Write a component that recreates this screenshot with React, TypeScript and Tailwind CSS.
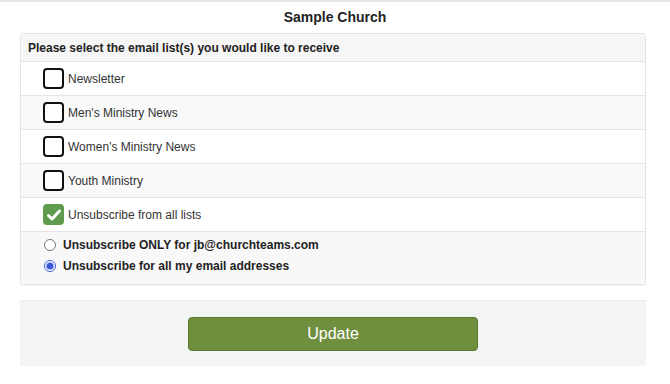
import { useState } from 'react'

const lists = [
  { label: 'Newsletter', checked: false },
  { label: "Men's Ministry News", checked: false },
  { label: "Women's Ministry News", checked: false },
  { label: 'Youth Ministry', checked: false },
  { label: 'Unsubscribe from all lists', checked: true },
]

const Box = ({ checked }: { checked: boolean }) =>
  checked ? (
    <span className="flex h-[21px] w-[21px] shrink-0 items-center justify-center rounded-[4px] bg-[#5f9b4c]">
      <svg width="16" height="16" viewBox="0 0 16 16" fill="none">
        <path d="M2.5 8.5l3.5 3.5 7.5-8" stroke="white" strokeWidth="3" strokeLinecap="round" strokeLinejoin="round" />
      </svg>
    </span>
  ) : (
    <span className="h-[21px] w-[21px] shrink-0 rounded-[4px] border-2 border-[#111] bg-white" />
  )

export default function App() {
  const [scope, setScope] = useState('all')
  return (
    <div className="min-h-[384px] bg-white font-['Liberation_Sans',Arial,sans-serif] text-[#333]">
      <div className="border-t-2 border-[#e6e6e6] pt-[5px] text-center text-[14px] leading-[20px] font-bold text-[#222]">
        Sample Church
      </div>
      <div className="mx-[20px] mt-[6px] w-[626px] rounded-[3px] border border-[#e4e4e4] bg-white shadow-[0_1px_1px_rgba(0,0,0,0.05)]">
        <div className="flex h-[28px] items-center border-b border-[#e4e4e4] bg-[#f6f6f6] px-[7px] text-[12px] font-bold text-[#222]">
          Please select the email list(s) you would like to receive
        </div>
        {lists.map((item, i) => (
          <div
            key={item.label}
            className={`flex h-[34px] items-center gap-[4px] border-b border-[#e4e4e4] pl-[22px] text-[12px] text-[#333] ${i % 2 === 1 ? 'bg-[#f9f9f9]' : 'bg-white'}`}
          >
            <Box checked={item.checked} />
            <span>{item.label}</span>
          </div>
        ))}
        <div className="flex flex-col gap-[3px] bg-[#f8f8f8] px-[23px] pt-[4px] pb-[9px] text-[12px] leading-[18px] font-bold text-[#222]">
          <label className="flex items-center gap-[7px]">
            <input
              type="radio"
              name="scope"
              checked={scope === 'one'}
              onChange={() => setScope('one')}
              className="m-0 h-[12px] w-[12px]"
            />
            Unsubscribe ONLY for jb@churchteams.com
          </label>
          <label className="flex items-center gap-[7px]">
            <input
              type="radio"
              name="scope"
              checked={scope === 'all'}
              onChange={() => setScope('all')}
              className="m-0 h-[12px] w-[12px] accent-[#3b5bdb]"
            />
            Unsubscribe for all my email addresses
          </label>
        </div>
      </div>
      <div className="mx-[20px] mt-[15px] flex h-[66px] w-[626px] items-center justify-center border-t border-[#ececec] bg-[#f3f4f4]">
        <button
          type="button"
          className="h-[34px] w-[290px] rounded-[4px] border border-[#5b7a30] bg-[#6f8f3f] text-[16px] text-white"
        >
          Update
        </button>
      </div>
    </div>
  )
}
